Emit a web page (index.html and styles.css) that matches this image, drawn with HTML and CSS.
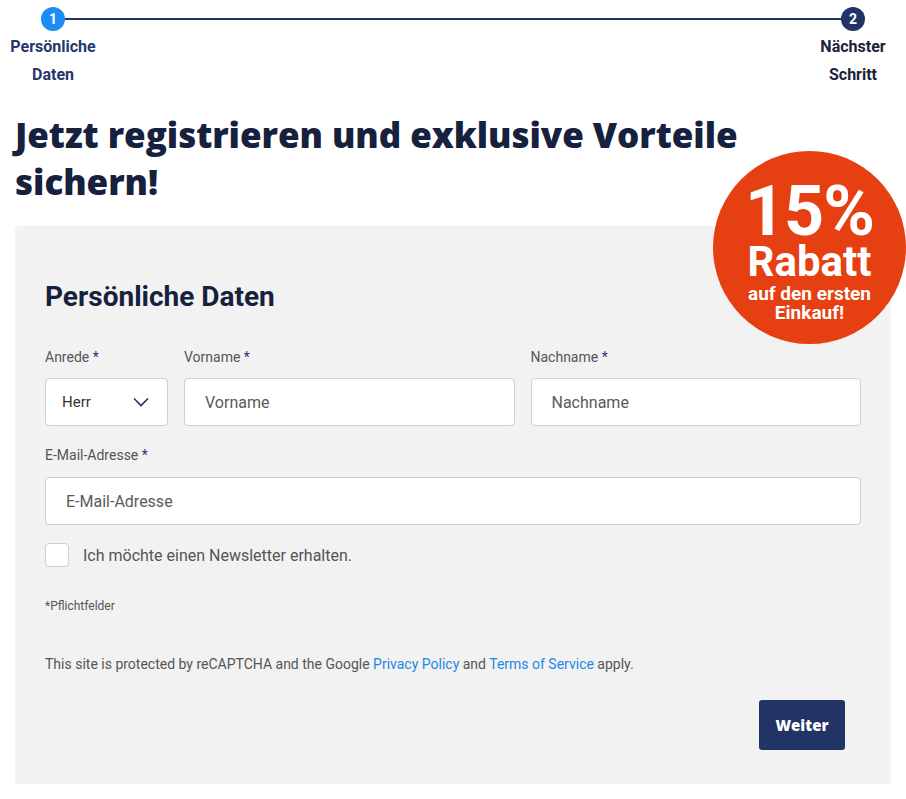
FILE: index.html
```html
<!DOCTYPE html>
<html lang="de">
<head>
<meta charset="utf-8">
<title>Registrieren</title>
<link rel="stylesheet" href="styles.css">
</head>
<body>
<div class="page">
  <div class="stepper">
    <div class="step step-active">
      <span class="step-dot">1</span>
      <span class="step-label">Persönliche<br>Daten</span>
    </div>
    <div class="step step-next">
      <span class="step-dot">2</span>
      <span class="step-label">Nächster<br>Schritt</span>
    </div>
  </div>

  <h1 class="title">Jetzt registrieren und exklusive Vorteile sichern!</h1>

  <div class="badge">
    <span class="badge-big">15%</span>
    <span class="badge-mid">Rabatt</span>
    <span class="badge-small">auf den ersten<br>Einkauf!</span>
  </div>

  <form class="card">
    <h2 class="card-title">Persönliche Daten</h2>

    <div class="row row-names">
      <div class="field">
        <label class="label">Anrede <span class="req">*</span></label>
        <div class="select">
          <span>Herr</span>
          <svg width="16" height="10" viewBox="0 0 16 10"><path d="M1 1.5 L8 8.5 L15 1.5" fill="none" stroke="#223366" stroke-width="1.6"/></svg>
        </div>
      </div>
      <div class="field">
        <label class="label">Vorname <span class="req">*</span></label>
        <div class="input">Vorname</div>
      </div>
      <div class="field">
        <label class="label">Nachname <span class="req">*</span></label>
        <div class="input">Nachname</div>
      </div>
    </div>

    <div class="field field-email">
      <label class="label">E-Mail-Adresse <span class="req">*</span></label>
      <div class="input">E-Mail-Adresse</div>
    </div>

    <div class="check-row">
      <span class="checkbox"></span>
      <span class="check-text">Ich möchte einen Newsletter erhalten.</span>
    </div>

    <p class="required-note">*Pflichtfelder</p>

    <p class="recaptcha">This site is protected by reCAPTCHA and the Google <a href="#">Privacy Policy</a> and <a href="#">Terms of Service</a> apply.</p>

    <div class="actions">
      <button type="button" class="btn">Weiter</button>
    </div>
  </form>
</div>
</body>
</html>
```

FILE: styles.css
```css
* { box-sizing: border-box; }

body {
  margin: 0;
  background: #ffffff;
  font-family: Roboto, "Liberation Sans", Arial, sans-serif;
  color: #555555;
}

.page {
  position: relative;
  width: 906px;
  padding: 0 15px;
}

/* Stepper */
.stepper {
  position: relative;
  display: flex;
  justify-content: space-between;
  margin: 0 -15px;
  padding-top: 7px;
  height: 90px;
}

.stepper::before {
  content: "";
  position: absolute;
  left: 53px;
  right: 53px;
  top: 18px;
  height: 2px;
  background: #223366;
}

.step {
  width: 106px;
  display: flex;
  flex-direction: column;
  align-items: center;
  position: relative;
}

.step-dot {
  width: 24px;
  height: 24px;
  border-radius: 50%;
  color: #ffffff;
  font-weight: 700;
  font-size: 14px;
  line-height: 24px;
  text-align: center;
}

.step-active .step-dot { background: #1e8cf5; }
.step-next .step-dot { background: #223366; }

.step-label {
  margin-top: 2px;
  font-size: 16px;
  font-weight: 700;
  line-height: 28px;
  text-align: center;
}

.step-active .step-label { color: #26376b; }
.step-next .step-label { color: #1b2238; }

/* Title */
.title {
  margin: 21px 0 0;
  width: 760px;
  font-family: "Open Sans", Roboto, sans-serif;
  font-size: 35px;
  line-height: 47px;
  font-weight: 800;
  color: #16213e;
  letter-spacing: -0.05px;
}

/* Badge */
.badge {
  position: absolute;
  left: 713px;
  top: 151px;
  width: 193px;
  height: 193px;
  border-radius: 50%;
  background: #e53f12;
  color: #ffffff;
  display: flex;
  flex-direction: column;
  align-items: center;
  padding-top: 33px;
  font-weight: 700;
  text-align: center;
  z-index: 2;
}

.badge-big {
  font-size: 70px;
  line-height: 54px;
  letter-spacing: -1px;
}

.badge-mid {
  margin-top: 4px;
  font-size: 42px;
  line-height: 40px;
}

.badge-small {
  margin-top: 2px;
  font-size: 19px;
  line-height: 19px;
}

/* Card */
.card {
  margin-top: 21px;
  background: #f2f2f2;
  border-radius: 4px;
  padding: 55px 30px 34px;
}

.card-title {
  margin: 0 0 34px;
  font-size: 28px;
  line-height: 32px;
  font-weight: 700;
  color: #16213e;
}

.row-names {
  display: grid;
  grid-template-columns: 123px 1fr 1fr;
  column-gap: 16px;
}

.field {
  display: flex;
  flex-direction: column;
}

.label {
  font-size: 14px;
  line-height: 20px;
  color: #555555;
  margin-bottom: 11px;
}

.req { color: #26376b; }

.input,
.select {
  height: 48px;
  background: #ffffff;
  border: 1px solid #cfcfcf;
  border-radius: 4px;
  display: flex;
  align-items: center;
  font-size: 16px;
  color: #5a5a5a;
}

.input { padding-left: 20px; }

.select {
  padding: 0 18px 0 16px;
  justify-content: space-between;
  font-size: 15px;
  color: #333333;
}

.field-email { margin-top: 19px; }
.field-email .label { margin-bottom: 12px; }

.check-row {
  margin-top: 18px;
  display: flex;
  align-items: center;
  gap: 14px;
}

.checkbox {
  width: 24px;
  height: 24px;
  background: #ffffff;
  border: 1px solid #cfcfcf;
  border-radius: 4px;
}

.check-text {
  font-size: 16px;
  color: #555555;
}

.required-note {
  margin: 31px 0 0;
  font-size: 12px;
  line-height: 16px;
  color: #555555;
}

.recaptcha {
  margin: 40px 0 0;
  font-size: 14px;
  line-height: 20px;
  color: #555555;
}

.recaptcha a {
  color: #1e88e5;
  text-decoration: none;
}

.actions {
  margin-top: 26px;
  display: flex;
  justify-content: flex-end;
  padding-right: 16px;
}

.btn {
  width: 86px;
  height: 50px;
  background: #223366;
  border: 0;
  border-radius: 3px;
  color: #ffffff;
  font-family: "Open Sans", Roboto, sans-serif;
  font-weight: 800;
  font-size: 15px;
}
```
